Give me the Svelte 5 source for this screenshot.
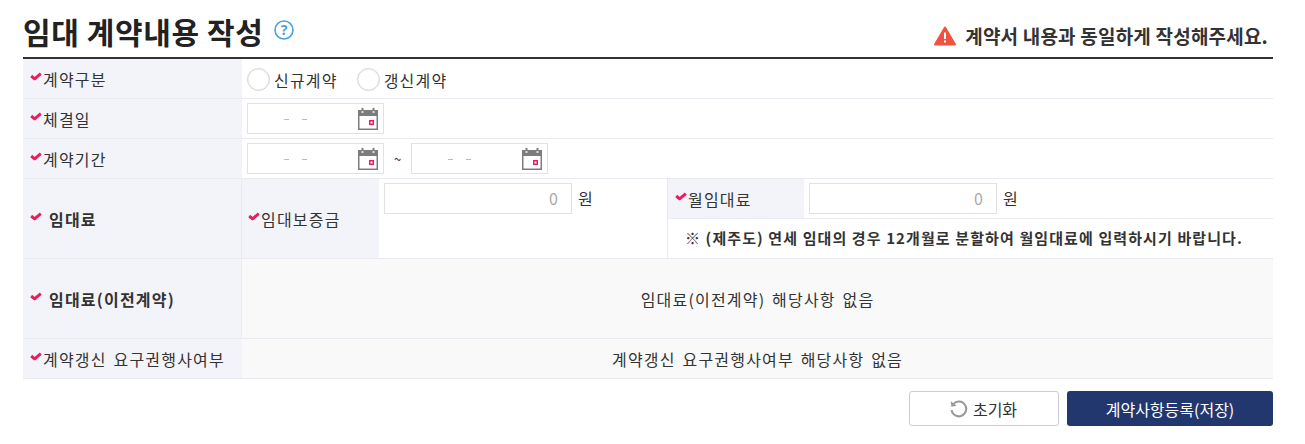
{#snippet check()}
  <svg class="check" viewBox="0 0 12 9" width="12" height="9" aria-hidden="true">
    <path d="M1.2 4 L4.6 6.8 L10.8 1.6" fill="none" stroke="#ec1c5c" stroke-width="3" stroke-linejoin="round" />
  </svg>
{/snippet}

{#snippet dateInput()}
  <div class="date">
    <span class="dashes"><i></i><i></i></span>
    <svg class="cal" viewBox="0 0 20 22" width="20" height="22" aria-hidden="true">
      <rect x="0" y="2" width="20" height="20" fill="#7c7c7c" />
      <rect x="1.5" y="8" width="17" height="12.5" fill="#fff" />
      <rect x="3.5" y="0" width="2" height="4" fill="#7c7c7c" />
      <rect x="14.5" y="0" width="2" height="4" fill="#7c7c7c" />
      <rect x="3.5" y="3" width="2" height="2" fill="#ddd" />
      <rect x="14.5" y="3" width="2" height="2" fill="#ddd" />
      <rect x="11" y="12" width="5" height="5" fill="#ec1c5c" />
      <rect x="12.5" y="13.5" width="2" height="2" fill="#fff" />
    </svg>
  </div>
{/snippet}

<main class="page">
  <header class="head">
    <div class="title">
      <h1>임대 계약내용 작성</h1>
      <svg class="help" viewBox="0 0 20 20" width="20" height="20" aria-hidden="true">
        <circle cx="10" cy="10" r="9" fill="none" stroke="#4aa3df" stroke-width="1.6" />
        <text x="10" y="15" text-anchor="middle" font-size="14" font-weight="700" fill="#4aa3df" font-family="Noto Sans, sans-serif">?</text>
      </svg>
    </div>
    <p class="notice">
      <svg viewBox="0 0 22 20" width="22" height="20" aria-hidden="true">
        <path d="M11 1.5 L21 18.5 H1 Z" fill="#ef5340" stroke="#ef5340" stroke-width="2" stroke-linejoin="round" />
        <rect x="10" y="6.5" width="2" height="6.5" fill="#fff" />
        <rect x="10" y="14.5" width="2" height="2" fill="#fff" />
      </svg>
      계약서 내용과 동일하게 작성해주세요.
    </p>
  </header>

  <section class="form">
    <div class="row h40">
      <div class="label">{@render check()}계약구분</div>
      <div class="value radios">
        <label class="radio"><span class="dot"></span>신규계약</label>
        <label class="radio"><span class="dot"></span>갱신계약</label>
      </div>
    </div>
    <div class="row h40">
      <div class="label">{@render check()}체결일</div>
      <div class="value">{@render dateInput()}</div>
    </div>
    <div class="row h40">
      <div class="label">{@render check()}계약기간</div>
      <div class="value">
        {@render dateInput()}
        <span class="tilde">~</span>
        {@render dateInput()}
      </div>
    </div>
    <div class="row h80">
      <div class="label strong divided">{@render check()}임대료</div>
      <div class="rent">
        <div class="sublabel deposit">{@render check()}임대보증금</div>
        <div class="amount">
          <span class="num">0</span>
          <span>원</span>
        </div>
        <div class="monthly">
          <div class="monthly-top">
            <div class="sublabel">{@render check()}월임대료</div>
            <div class="amount">
              <span class="num">0</span>
              <span>원</span>
            </div>
          </div>
          <p class="hint">※ (제주도) 연세 임대의 경우 12개월로 분할하여 월임대료에 입력하시기 바랍니다.</p>
        </div>
      </div>
    </div>
    <div class="row h80">
      <div class="label strong divided">{@render check()}임대료(이전계약)</div>
      <div class="value empty">임대료(이전계약) 해당사항 없음</div>
    </div>
    <div class="row h40">
      <div class="label">{@render check()}계약갱신 요구권행사여부</div>
      <div class="value empty">계약갱신 요구권행사여부 해당사항 없음</div>
    </div>
  </section>

  <footer class="actions">
    <button class="btn reset">
      <svg viewBox="0 0 18 18" width="19" height="19" aria-hidden="true">
        <path d="M4.2 4.6 A7 7 0 1 1 2.4 10.6" fill="none" stroke="#999" stroke-width="2" />
        <path d="M1.6 2.2 L2.2 7.4 L7.2 6.4 Z" fill="#999" />
      </svg>
      초기화
    </button>
    <button class="btn save">계약사항등록(저장)</button>
  </footer>
</main>

<style>
  :global(body) {
    margin: 0;
    background: #fff;
    font-family: "Noto Sans CJK KR", "Noto Sans", sans-serif;
    color: #333;
  }

  .page {
    width: 1250px;
    margin-left: 23px;
  }

  .head {
    height: 57px;
    display: flex;
    justify-content: space-between;
    align-items: flex-end;
  }

  .title {
    display: flex;
    align-items: center;
    gap: 11px;
    padding-bottom: 6px;
  }

  h1 {
    margin: 0;
    font-size: 30px;
    line-height: 40px;
    font-weight: 700;
    letter-spacing: 0.6px;
    color: #222;
  }

  .help {
    margin-top: -3px;
  }

  .notice {
    display: flex;
    align-items: center;
    gap: 9px;
    margin: 0 5px 8px 0;
    font-size: 19px;
    line-height: 26px;
    font-weight: 700;
    letter-spacing: 0.2px;
  }

  .form {
    border-top: 2px solid #333;
  }

  .row {
    display: grid;
    grid-template-columns: 219px 1fr;
    border-bottom: 1px solid #e9ebf0;
    box-sizing: border-box;
    font-size: 16px;
    letter-spacing: 1.2px;
    word-spacing: 2px;
  }

  .h40 {
    height: 40px;
  }

  .h80 {
    height: 80px;
  }

  .label,
  .sublabel {
    display: flex;
    align-items: center;
    padding-left: 7px;
    background: #f3f4f9;
    white-space: nowrap;
  }

  .divided {
    border-right: 1px solid #e9ebf0;
  }

  .check {
    margin: -4px 1px 0 0;
    flex: none;
  }

  .strong {
    font-weight: 700;
  }

  .strong .check {
    margin-right: 7px;
  }

  .value {
    display: flex;
    align-items: center;
    padding-left: 5px;
  }

  .radios {
    gap: 19px;
    padding-top: 2px;
  }

  .radio {
    display: flex;
    align-items: center;
    gap: 4px;
  }

  .dot {
    width: 21px;
    height: 21px;
    border: 1px solid #d4d4d4;
    border-radius: 50%;
    box-shadow: inset 0 0 2px #ddd;
  }

  .date {
    width: 137px;
    height: 31px;
    box-sizing: border-box;
    border: 1px solid #e2e2e2;
    display: flex;
    align-items: center;
    justify-content: flex-end;
    padding-right: 5px;
    position: relative;
  }

  .dashes {
    position: absolute;
    left: 36px;
    top: 15px;
    display: flex;
    gap: 13px;
  }

  .dashes i {
    width: 5px;
    height: 1px;
    background: #bbb;
  }

  .tilde {
    margin: 0 10px;
    font-size: 13px;
    letter-spacing: 0;
  }

  .rent {
    display: grid;
    grid-template-columns: 137px 288px 1fr;
  }

  .deposit {
    padding-left: 6px;
  }

  .amount {
    display: flex;
    gap: 6px;
    padding: 4px 0 0 5px;
    line-height: 31px;
  }

  .num {
    width: 188px;
    height: 31px;
    box-sizing: border-box;
    border: 1px solid #e2e2e2;
    text-align: right;
    padding-right: 13px;
    line-height: 29px;
    font-size: 16px;
    letter-spacing: 0;
    color: #aaa;
  }

  .monthly {
    border-left: 1px solid #e9ebf0;
  }

  .monthly-top {
    display: grid;
    grid-template-columns: 136px 1fr;
    height: 39px;
    border-bottom: 1px solid #e9ebf0;
  }

  .hint {
    margin: 0;
    padding-left: 17px;
    font-size: 15px;
    font-weight: 700;
    letter-spacing: 1.1px;
    word-spacing: 0;
    line-height: 38px;
    white-space: nowrap;
  }

  .empty {
    justify-content: center;
    background: #f9f9f9;
    padding-left: 0;
  }

  .actions {
    display: flex;
    justify-content: flex-end;
    gap: 8px;
    margin-top: 12px;
  }

  .btn {
    height: 35px;
    box-sizing: border-box;
    border-radius: 3px;
    font: inherit;
    font-size: 16px;
    display: flex;
    align-items: center;
    justify-content: center;
  }

  .reset {
    width: 150px;
    gap: 5px;
    padding-right: 8px;
    background: #fff;
    border: 1px solid #ccc;
    color: #333;
  }

  .save {
    width: 206px;
    background: #23376f;
    border: 0;
    color: #fff;
  }
</style>
